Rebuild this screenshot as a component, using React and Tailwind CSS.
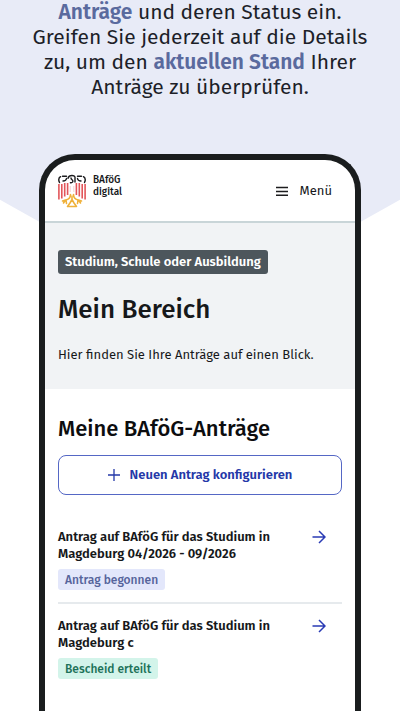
import React from "react";

const applications = [
  {
    title: "Antrag auf BAföG für das Studium in Magdeburg 04/2026 - 09/2026",
    status: "Antrag begonnen",
    tone: "bg-[#e3e7fb] text-[#56649b]",
  },
  {
    title: "Antrag auf BAföG für das Studium in Magdeburg c",
    status: "Bescheid erteilt",
    tone: "bg-[#d3f4ea] text-[#1d7259]",
  },
];

function Eagle() {
  return (
    <svg viewBox="0 0 28 34" className="h-[34px] w-7" fill="none" aria-hidden="true">
      <g stroke="#1c1c1e" strokeWidth="1.400" strokeLinecap="round" strokeLinejoin="round">
        <path d="M1.500 8.500C0.500 6.500 0.600 4 2.500 2.700M4.500 2.200h4M8.500 4.500C8.300 6 7 7 5 7" />
        <path d="M26.500 8.500c1-2 0.900-4.500-1-5.800M23.500 2.200h-4M19.500 4.500C19.700 6 21 7 23 7" />
        <path d="M10 4.300c0.500-1.800 2-2.800 4-2.800 1.400 0 2.600 0.500 3 1.500v5M13 4c0 1.800 2 1.700 1.900 3.200-0.100 1.200-1.300 1.800-2.500 1.500" />
      </g>
      <g stroke="#e2565a" strokeWidth="1.600">
        <path d="M0.900 10v15.500M3.800 10v14.500M6.700 9v13.500M9.600 9v12M18.400 9v12M21.300 9v13.500M24.200 10v14.500M27.100 10v15.500" />
        <path d="M12.200 12v6M15.800 12v6" strokeWidth="0.700" strokeOpacity="0.400" />
      </g>
      <g stroke="#efb13a" strokeWidth="1.600" strokeLinecap="round" strokeLinejoin="round">
        <path d="M12.500 20.500c0 3-2 5-5 5.500l-3 1M7.500 26l-2 3M8 26l0.500 3.500" />
        <path d="M15.500 20.500c0 3 2 5 5 5.500l3 1M20.500 26l2 3M20 26l-0.500 3.500" />
        <path d="M14 22v3.500l-2 3.500-2.500 3.500h9L16 29l-2-3.500" />
      </g>
    </svg>
  );
}

function Arrow() {
  return (
    <svg viewBox="0 0 14 14" className="h-3.5 w-3.5" fill="none" stroke="#2a3bb5" strokeWidth="1.500" aria-hidden="true">
      <path d="M0.500 7H13M7 1l6 6-6 6" />
    </svg>
  );
}

export default function App() {
  return (
    <div className="relative isolate flex h-screen flex-col overflow-hidden bg-white font-['Fira_Sans','Noto_Sans',sans-serif] text-[#16181a]">
      <div className="absolute inset-x-0 top-0 -z-10 h-[312px] bg-[#e8ebf7] [clip-path:polygon(0_0,100%_0,100%_64%,50%_100%,0_64%)]" />

      <p className="px-5 text-center text-[21px] leading-[25px] text-[#1d1f29]">
        <strong className="font-semibold text-[#5a6a9e]">Anträge</strong> und deren Status ein.
        <br />
        Greifen Sie jederzeit auf die Details
        <br />
        zu, um den <strong className="font-semibold text-[#5a6a9e]">aktuellen Stand</strong> Ihrer
        <br />
        Anträge zu überprüfen.
      </p>

      <div className="mx-[39px] mt-[54px] flex flex-1 flex-col overflow-hidden rounded-t-[36px] border-x-[6px] border-t-[6px] border-[#1a1d1e] bg-white">
        <header className="flex h-[63px] items-center justify-between border-b-2 border-[#c9d5d8] px-[13px]">
          <div className="flex items-start gap-[7px]">
            <Eagle />
            <span className="text-[10px] leading-3 font-medium">
              BAföG
              <br />
              digital
            </span>
          </div>
          <button type="button" className="mr-[10px] flex items-center gap-3 text-[13px]">
            <svg viewBox="0 0 12 10" className="h-2.5 w-3" stroke="#1c1c1e" strokeWidth="1.500" aria-hidden="true">
              <path d="M0 1.500h12M0 5.500h12M0 9.200h12" />
            </svg>
            Menü
          </button>
        </header>

        <section className="bg-[#f1f3f5] px-[13px] pt-[27px] pb-[25px]">
          <span className="flex h-6 w-fit items-center rounded-[3px] bg-[#4d565c] px-[7px] text-[13px] font-semibold text-white">
            Studium, Schule oder Ausbildung
          </span>
          <h1 className="mt-5 text-[26px] leading-8 font-medium">Mein Bereich</h1>
          <p className="mt-5 text-[13px] leading-[18px]">Hier finden Sie Ihre Anträge auf einen Blick.</p>
        </section>

        <main className="px-[13px] pt-[26px]">
          <h2 className="text-[22px] leading-7 font-medium text-[#0c0d0f]">Meine BAföG-Anträge</h2>
          <button
            type="button"
            className="mt-3 flex h-10 w-full items-center justify-center gap-[10px] rounded-[8px] border border-[#5567c5] text-[13px] font-semibold text-[#2438a8]"
          >
            <svg viewBox="0 0 12 12" className="h-3 w-3" stroke="#2438a8" strokeWidth="1.300" aria-hidden="true">
              <path d="M0 6h12M6 0v12" />
            </svg>
            Neuen Antrag konfigurieren
          </button>

          <ul className="mt-5 divide-y-2 divide-[#e6eaed]">
            {applications.map((item) => (
              <li key={item.title} className="flex items-start justify-between pt-[13px] pr-4 pb-3">
                <div className="w-[222px]">
                  <h3 className="text-[13px] leading-[17px] font-semibold">{item.title}</h3>
                  <span className={`mt-[7px] flex h-[21px] w-fit items-center rounded-[3px] px-[7px] text-[12px] font-medium ${item.tone}`}>
                    {item.status}
                  </span>
                </div>
                <a href="#antrag" aria-label={item.title} className="mt-[2px]">
                  <Arrow />
                </a>
              </li>
            ))}
          </ul>
        </main>
      </div>
    </div>
  );
}
